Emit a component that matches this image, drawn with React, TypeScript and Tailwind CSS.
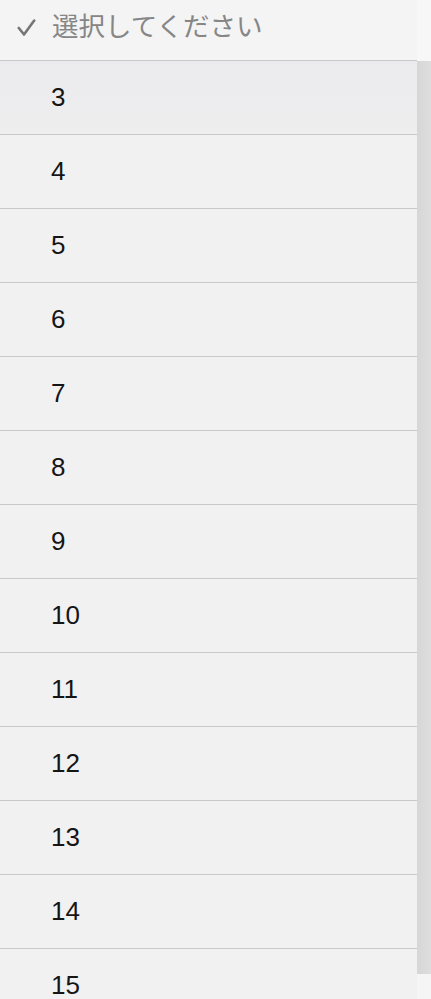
import React from "react";

const items = [3, 4, 5, 6, 7, 8, 9, 10, 11, 12, 13, 14, 15];

export default function App() {
  return (
    <div
      className="flex h-[999px] w-[431px] overflow-hidden bg-[#f4f4f4]"
      style={{ fontFamily: '"Liberation Sans", "Noto Sans CJK JP", sans-serif' }}
    >
      <div className="flex w-[417px] shrink-0 flex-col">
        <div className="flex h-[60px] shrink-0 items-center bg-[#f4f4f4] pb-[6px]">
          <svg width="19" height="19" viewBox="0 0 19 19" className="ml-[17px]">
            <path d="M1.8 10 L7 16.5 L17.2 2.5" fill="none" stroke="#767676" strokeWidth="2.6" strokeLinecap="round" strokeLinejoin="round" />
          </svg>
          <span className="ml-[16px] text-[26.5px] leading-none text-[#868686]">選択してください</span>
        </div>
        {items.map((n, i) => (
          <div
            key={n}
            className={`flex h-[74px] shrink-0 items-center border-t border-[#c9c8ca] pl-[51px] text-[26px] text-[#151515] ${
              i === 0 ? "bg-gradient-to-b from-[#ebeaec] to-[#efeeef]" : "bg-[#f2f1f2]"
            }`}
          >
            {n}
          </div>
        ))}
      </div>
      <div className="flex flex-1 flex-col">
        <div className="h-[61px] shrink-0 bg-[#f7f7f7]" />
        <div className="h-[913px] shrink-0 bg-gradient-to-r from-[#d6d6d6] to-[#dedede]" />
        <div className="flex-1 bg-[#f5f5f5]" />
      </div>
    </div>
  );
}
